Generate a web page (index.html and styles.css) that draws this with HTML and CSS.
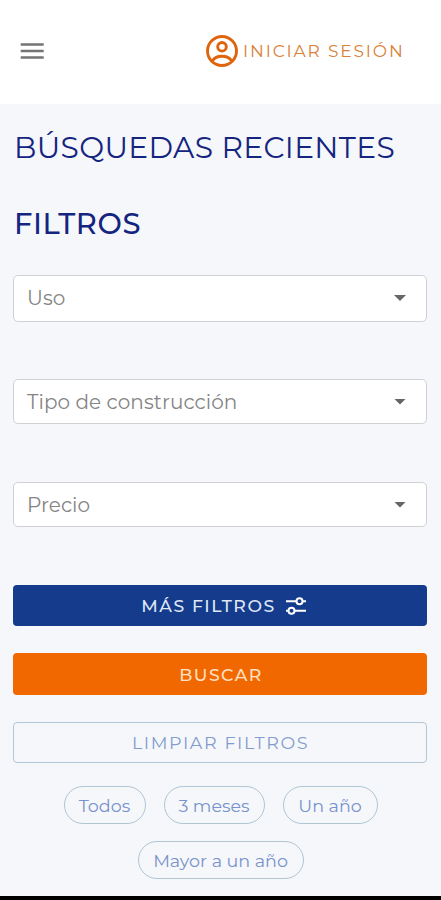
FILE: index.html
```html
<!DOCTYPE html>
<html lang="es">
<head>
<meta charset="utf-8">
<meta name="viewport" content="width=device-width, initial-scale=1">
<title>Filtros</title>
<link rel="stylesheet" href="styles.css">
</head>
<body>
<header class="topbar">
  <button class="menu" aria-label="Menú">
    <svg width="24" height="18" viewBox="0 0 24 18"><path d="M.7 2.500h23M.7 9h23M.7 15.500h23" stroke="#747474" stroke-width="2.300"/></svg>
  </button>
  <a class="login">
    <svg width="34" height="34" viewBox="0 0 34 34" fill="none" stroke="#df640c" stroke-width="2.9"><circle cx="17" cy="17" r="14.5"/><circle cx="17" cy="12.8" r="4.3"/><path d="M7.3 27c2-3.2 5.600-4.700 9.700-4.700s7.700 1.500 9.700 4.700"/></svg>
    <span class="login-text">INICIAR SESIÓN</span>
  </a>
</header>
<main class="content">
  <h1 class="recent"><span>BÚSQUEDAS RECIENTES</span></h1>
  <h2 class="title"><span>FILTROS</span></h2>
  <div class="fields">
    <div class="select"><span>Uso</span><i class="arrow"></i></div>
    <div class="select"><span>Tipo de construcción</span><i class="arrow"></i></div>
    <div class="select"><span>Precio</span><i class="arrow"></i></div>
  </div>
  <div class="actions">
    <button class="btn more"><span>MÁS FILTROS</span>
      <svg width="22" height="20" viewBox="0 0 22 20" fill="none" stroke="#fff" stroke-width="2"><path d="M1 5.300h10.500M17.500 5.300H21M1 14.700h2.500M9.500 14.700H21"/><circle cx="14.500" cy="5.300" r="3"/><circle cx="6.500" cy="14.700" r="3"/></svg>
    </button>
    <button class="btn search"><span>BUSCAR</span></button>
    <button class="btn clear"><span>LIMPIAR FILTROS</span></button>
  </div>
  <div class="chips">
    <button class="chip c1"><span>Todos</span></button>
    <button class="chip c2"><span>3 meses</span></button>
    <button class="chip c3"><span>Un año</span></button>
    <button class="chip c4"><span>Mayor a un año</span></button>
  </div>
</main>
<footer class="system-bar"></footer>
</body>
</html>
```

FILE: styles.css
```css
* { box-sizing: border-box; }
body {
  margin: 0;
  height: 900px;
  display: flex;
  flex-direction: column;
  background: #f5f7fb;
  font-family: Montserrat, Inter, sans-serif;
  overflow: hidden;
}
button { font: inherit; margin: 0; padding: 0; border: 0; background: none; }
svg { display: block; flex: none; }
span { white-space: nowrap; }
.topbar {
  height: 104px;
  padding: 0 37px 2px 20px;
  display: flex;
  align-items: center;
  justify-content: space-between;
  background: #fff;
}
.login { display: flex; align-items: center; gap: 4px; color: #d98138; width: 199px; height: 34px; }
.login-text { font-size: 17px; letter-spacing: 1.85px; font-weight: 400; }
.content { flex: 1; padding: 0 14px 0 13px; }
.recent, .title { margin: 0; color: #14247f; font-size: 29px; line-height: 36px; padding-left: 1px; }
.recent { margin-top: 25px; font-weight: 400; letter-spacing: .35px; font-size: 29.700px; }
.title { margin-top: 41px; font-weight: 500; letter-spacing: .6px; }
.fields { margin-top: 33px; display: flex; flex-direction: column; gap: 57px; }
.select {
  height: 47px;
  display: flex;
  align-items: center;
  justify-content: space-between;
  padding: 0 20px 1px 13px;
  background: #fff;
  border: 1px solid #cfd1d4;
  border-radius: 5px;
  color: #858585;
  font-size: 20px;
  letter-spacing: .06px;
}
.fields .select + .select { height: 45px; padding-bottom: 0; }
.fields .select:last-child { margin-top: 1px; }
.arrow { width: 12px; height: 6px; background: #666; clip-path: polygon(0 0, 100% 0, 50% 100%); }
.actions { margin-top: 58px; display: flex; flex-direction: column; gap: 27px; }
.btn {
  height: 41px;
  width: 100%;
  border-radius: 4px;
  display: flex;
  align-items: center;
  justify-content: center;
  gap: 9px;
  font-size: 17.500px;
  letter-spacing: 1.6px;
  padding-left: 1px;
}
.more { background: #143b8c; color: #dfe6f5; padding-left: 8px; }
.search { height: 42px; background: #f26800; color: #ffe0c4; padding-left: 2px; }
.more, .search { font-weight: 500; font-size: 17.300px; letter-spacing: 1.5px; }
.clear { border: 1px solid #b3c6d6; color: #829dcd; }
.chips { margin: 23px -1px 0 0; display: flex; flex-wrap: wrap; justify-content: center; gap: 17px 18px; }
.chip { height: 38px; border: 1px solid #b1c5d3; border-radius: 19px; color: #7892cb; font-size: 17.500px; }
.c1 { width: 82px; }
.c2 { width: 101px; }
.c3 { width: 95px; }
.c4 { width: 166px; }
.system-bar { height: 4px; background: #000; }
```
